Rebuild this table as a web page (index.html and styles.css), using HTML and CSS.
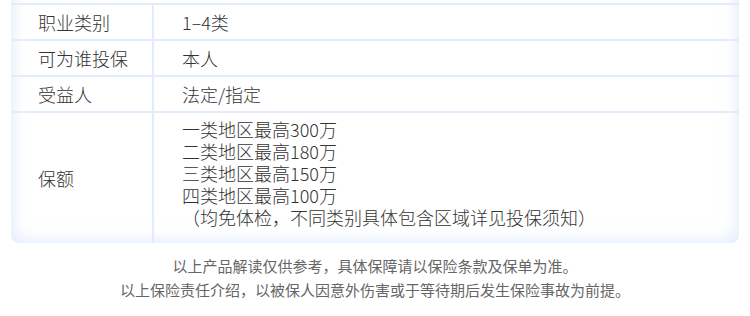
FILE: index.html
```html
<!DOCTYPE html>
<html lang="zh-CN">
<head>
<meta charset="utf-8">
<link rel="stylesheet" href="styles.css">
</head>
<body>
<div class="card">
  <div class="row">
    <div class="label">职业类别</div>
    <div class="value">1–4类</div>
  </div>
  <div class="row">
    <div class="label">可为谁投保</div>
    <div class="value">本人</div>
  </div>
  <div class="row">
    <div class="label">受益人</div>
    <div class="value">法定/指定</div>
  </div>
  <div class="row row-tall">
    <div class="label">保额</div>
    <div class="value multi">
      <div>一类地区最高300万</div>
      <div>二类地区最高180万</div>
      <div>三类地区最高150万</div>
      <div>四类地区最高100万</div>
      <div>（均免体检，不同类别具体包含区域详见投保须知）</div>
    </div>
  </div>
</div>
<div class="notes">
  <p>以上产品解读仅供参考，具体保障请以保险条款及保单为准。</p>
  <p>以上保险责任介绍，以被保人因意外伤害或于等待期后发生保险事故为前提。</p>
</div>
</body>
</html>
```

FILE: styles.css
```css
* { box-sizing: border-box; }
html, body { margin: 0; padding: 0; background: #ffffff; }
body {
  font-family: "Noto Sans CJK SC", "Noto Sans", sans-serif;
  color: #333333;
  overflow: hidden;
}
.card {
  margin: -40px 11px 0 11px;
  padding-top: 43px;
  background: #ffffff;
  border-radius: 8px;
  box-shadow: inset 0 0 18px rgba(186, 212, 246, 0.55);
  overflow: hidden;
}
.row {
  display: grid;
  grid-template-columns: 143px 1fr;
  border-top: 2px solid #e1ecfc;
}
.label, .value {
  font-size: 18px;
  font-weight: 300;
  line-height: 22px;
  padding: 6px 0;
}
.label {
  padding-left: 27px;
  border-right: 2px solid #e1ecfc;
}
.value {
  padding-left: 28px;
}
.row-tall .label {
  display: flex;
  align-items: center;
}
.value.multi {
  padding-top: 5px;
  padding-bottom: 15px;
}
.notes {
  margin-top: 11px;
  text-align: center;
  color: #666666;
  font-size: 15px;
  line-height: 24px;
}
.notes p { margin: 0; }
```
